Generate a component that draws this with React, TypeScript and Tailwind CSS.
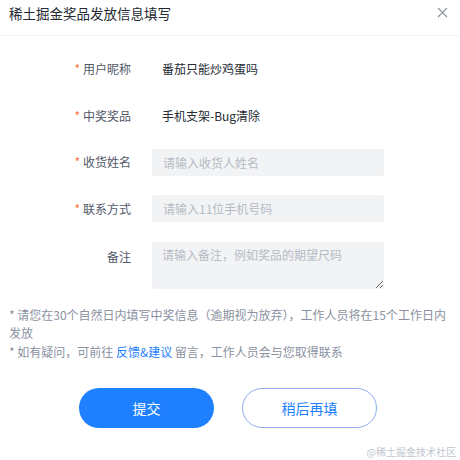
const font = { fontFamily: '"Noto Sans CJK SC", "Noto Sans", sans-serif' };

function Label({ text, required }: { text: string; required?: boolean }) {
  return (
    <div className="flex w-[131px] shrink-0 items-center justify-end text-[12px] leading-[18px] text-[#515767]">
      {required && <span className="mr-[3px] text-[12px] text-[#f5723f]">*</span>}
      <span>{text}</span>
    </div>
  );
}

export default function App() {
  return (
    <div className="relative h-[460px] w-[460px] overflow-hidden bg-white" style={font}>
      <header className="flex items-start justify-between border-b border-[#f1f2f4] pb-[12px] pl-[9px] pr-[12px] pt-[3px]">
        <h1 className="text-[13.5px] leading-[20px] text-[#252933]">稀土掘金奖品发放信息填写</h1>
        <button className="mt-[4px] text-[#8a919f]" aria-label="关闭">
          <svg width="11" height="11" viewBox="0 0 11 11" fill="none" stroke="currentColor" strokeWidth="1.1">
            <path d="M1 1l9 9M10 1l-9 9" />
          </svg>
        </button>
      </header>

      <form className="flex flex-col gap-[19.5px] pt-[19.5px]">
        <div className="flex h-[27px] items-center gap-[21px]">
          <Label text="用户昵称" required />
          <span className="pl-[10px] text-[12px] text-[#252933]">番茄只能炒鸡蛋吗</span>
        </div>
        <div className="flex h-[27px] items-center gap-[21px]">
          <Label text="中奖奖品" required />
          <span className="pl-[10px] text-[12px] text-[#252933]">手机支架-Bug清除</span>
        </div>
        <div className="flex h-[27px] items-center gap-[21px]">
          <Label text="收货姓名" required />
          <input
            className="h-[27px] w-[232px] rounded-[2px] bg-[#f2f3f5] px-[11px] text-[12px] text-[#252933] outline-none placeholder:text-[#b6bbc4]"
            placeholder="请输入收货人姓名"
          />
        </div>
        <div className="flex h-[27px] items-center gap-[21px]">
          <Label text="联系方式" required />
          <input
            className="h-[27px] w-[232px] rounded-[2px] bg-[#f2f3f5] px-[11px] text-[12px] text-[#252933] outline-none placeholder:text-[#b6bbc4]"
            placeholder="请输入11位手机号码"
          />
        </div>
        <div className="flex items-start gap-[21px]">
          <div className="pt-[6px]">
            <Label text="备注" />
          </div>
          <textarea
            className="h-[47px] w-[232px] resize-y rounded-[2px] bg-[#f2f3f5] px-[10px] py-[4px] text-[12px] leading-[18px] text-[#252933] outline-none placeholder:text-[#b6bbc4]"
            placeholder="请输入备注，例如奖品的期望尺码"
          />
        </div>
      </form>

      <div className="mt-[17px] px-[9px] text-[12px] leading-[18.5px] text-[#8a919f]">
        <p>
          * 请您在30个自然日内填写中奖信息（逾期视为放弃），工作人员将在15个工作日内
          <br />
          发放
        </p>
        <p>
          * 如有疑问，可前往 <a className="text-[#1e80ff]">反馈&amp;建议</a> 留言，工作人员会与您取得联系
        </p>
      </div>

      <div className="mt-[27px] flex gap-[28px] pl-[79px]">
        <button className="h-[40px] w-[135px] rounded-full bg-[#1e80ff] text-[14px] text-white">提交</button>
        <button className="h-[40px] w-[135px] rounded-full border border-[#8eacf0] bg-white text-[14px] text-[#1e80ff]">
          稍后再填
        </button>
      </div>

      <span className="absolute bottom-[2px] right-[4px] text-[10px] leading-[12px] text-[#c2c6cc]">@稀土掘金技术社区</span>
    </div>
  );
}
